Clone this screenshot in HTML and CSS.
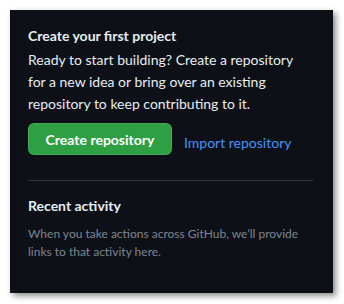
FILE: index.html
```html
<!DOCTYPE html>
<html lang="en">
<head>
    <meta charset="UTF-8">
    <meta name="viewport" content="width=device-width, initial-scale=1.0">
    <title>Dashboard</title>
    <link rel="stylesheet" href="styles.css">
</head>
<body>
    <div class="panel">
        <section class="first-project">
            <h2>Create your first project</h2>
            <p>Ready to start building? Create a repository for a new idea or bring over an existing repository to keep contributing to it.</p>
            <div class="actions">
                <button class="btn-create">Create repository</button>
                <a href="#" class="import-link">Import repository</a>
            </div>
        </section>

        <section class="recent">
            <h2>Recent activity</h2>
            <p>When you take actions across GitHub, we’ll provide links to that activity here.</p>
        </section>
    </div>
</body>
</html>
```

FILE: styles.css
```css
body {
    margin: 0;
    padding: 10px;
    background: #ffffff;
    font-family: 'Lato', 'Noto Sans', sans-serif;
}
.panel {
    width: 323px;
    height: 283px;
    box-sizing: border-box;
    background: #0d1117;
    padding: 16px 20px 0 18px;
    box-shadow: 3px 3px 6px rgba(0, 0, 0, 0.45);
}
h2 {
    margin: 0;
    font-size: 14px;
    font-weight: 700;
    color: #e6edf3;
    line-height: 20px;
}
.first-project p {
    margin: 3px 0 0 0;
    font-size: 14px;
    line-height: 22px;
    color: #e6edf3;
}
.actions {
    display: flex;
    align-items: center;
    gap: 12px;
    margin-top: 8px;
}
.btn-create {
    width: 144px;
    height: 32px;
    background: #2ea043;
    color: #ffffff;
    border: 1px solid rgba(240, 246, 252, 0.1);
    border-radius: 6px;
    font-family: inherit;
    font-size: 14px;
    font-weight: 700;
    padding: 0 12px;
    white-space: nowrap;
    cursor: pointer;
}
.import-link {
    color: #4493f8;
    font-size: 14px;
    text-decoration: none;
    margin-top: 6px;
}
.recent {
    margin-top: 25px;
    border-top: 1px solid #30363d;
    padding-top: 15px;
}
.recent p {
    margin: 9px 0 0 0;
    font-size: 12px;
    line-height: 18px;
    color: #7d8590;
}
```
